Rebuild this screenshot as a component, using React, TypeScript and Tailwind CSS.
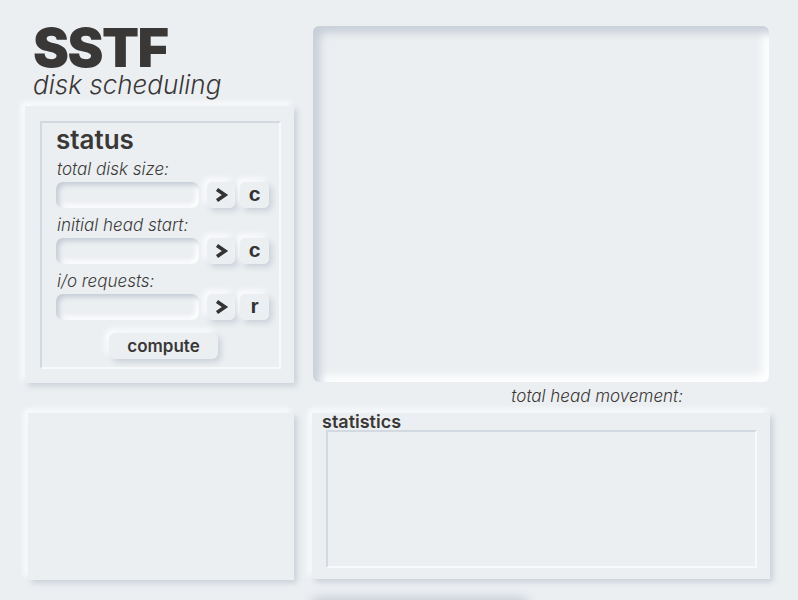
import React from "react";

const raised = "shadow-[3px_3px_6px_#c9d0d8,-3px_-3px_6px_#ffffff]";
const inset = "shadow-[inset_3px_3px_5px_#c5ccd5,inset_-3px_-3px_5px_#ffffff]";

function Field({ label, key2 }: { label: string; key2: string }) {
  return (
    <div>
      <div className="italic text-[17px] leading-[20px] text-[#3d3b3a] font-light pl-[1px]">{label}</div>
      <div className="flex items-center gap-[5px] mt-[3px]">
        <div className={`w-[143px] h-[26px] rounded-[7px] bg-[#eceff2] ${inset}`} />
        <button className={`ml-[3px] w-[28px] h-[26px] rounded-[5px] bg-[#eceff2] ${raised} flex items-center justify-center`}>
          <svg width="16" height="16" viewBox="0 0 16 16">
            <path d="M4 2.5 L12 8 L4 13.5" fill="none" stroke="#333" strokeWidth="3.6" strokeLinejoin="miter" />
          </svg>
        </button>
        <button
          className={`w-[29px] h-[26px] rounded-[5px] bg-[#eceff2] ${raised} flex items-center justify-center text-[21px] font-bold text-[#333] pb-[2px]`}
          style={{ fontFamily: '"Liberation Sans", Arial, sans-serif' }}
        >
          {key2}
        </button>
      </div>
    </div>
  );
}

export default function App() {
  return (
    <div
      className="w-[798px] h-[600px] overflow-hidden bg-[#eceff2] text-[#3a3837]"
      style={{ fontFamily: 'Inter, "Open Sans", sans-serif' }}
    >
      <div className="flex">
        <div className="ml-[25px] w-[269px]">
          <div className="pl-[8px] pt-[24px]">
            <div className="text-[54px] leading-[48px] font-black tracking-[-1.5px]">SSTF</div>
            <div className="text-[26px] leading-[22px] italic font-light mt-[2px]">disk scheduling</div>
          </div>
          <div className={`mt-[10px] h-[277px] bg-[#eceff2] ${raised} p-[15px] pr-[13px]`}>
            <div className="h-[248px] border-[2px] border-t-[#d3d9e0] border-l-[#d3d9e0] border-r-[#f7f9fa] border-b-[#f7f9fa] pl-[14px]">
              <div className="text-[26px] leading-[30px] font-semibold mt-[2px]">status</div>
              <div className="flex flex-col gap-[7px] mt-[4px]">
                <Field label="total disk size:" key2="c" />
                <Field label="initial head start:" key2="c" />
                <Field label="i/o requests:" key2="r" />
              </div>
              <div className="flex justify-center mt-[13px] pr-[8px]">
                <button className={`w-[109px] h-[26px] rounded-[6px] bg-[#eceff2] ${raised} text-[17px] font-semibold leading-[26px]`}>
                  compute
                </button>
              </div>
            </div>
          </div>
        </div>
        <div className="ml-[19px] mt-[26px] w-[456px]">
          <div className="h-[356px] rounded-[6px] bg-[#eceff2] shadow-[inset_7px_7px_8px_#c8cfd8,inset_-6px_-6px_8px_#ffffff]" />
          <div className="text-right pr-[86px] mt-[4px] italic font-light text-[17px] leading-[20px]">total head movement:</div>
        </div>
      </div>
      <div className="flex mt-[7px]">
        <div className={`ml-[28px] w-[266px] h-[167px] bg-[#eceff2] ${raised}`} />
        <div className={`ml-[18px] w-[458px] h-[166px] bg-[#eceff2] ${raised} pl-[14px] pr-[13px]`}>
          <div className="text-[18px] font-semibold leading-[16px] -ml-[4px] pt-[1px]">statistics</div>
          <div className="h-[138px] border-[2px] border-t-[#d3d9e0] border-l-[#d3d9e0] border-r-[#f7f9fa] border-b-[#f7f9fa]" />
        </div>
      </div>
      <div className="ml-[310px] mt-[24px] w-[220px] h-[20px] rounded-full bg-[#eceff2] shadow-[0_-6px_12px_#c2c9d1]" />
    </div>
  );
}
